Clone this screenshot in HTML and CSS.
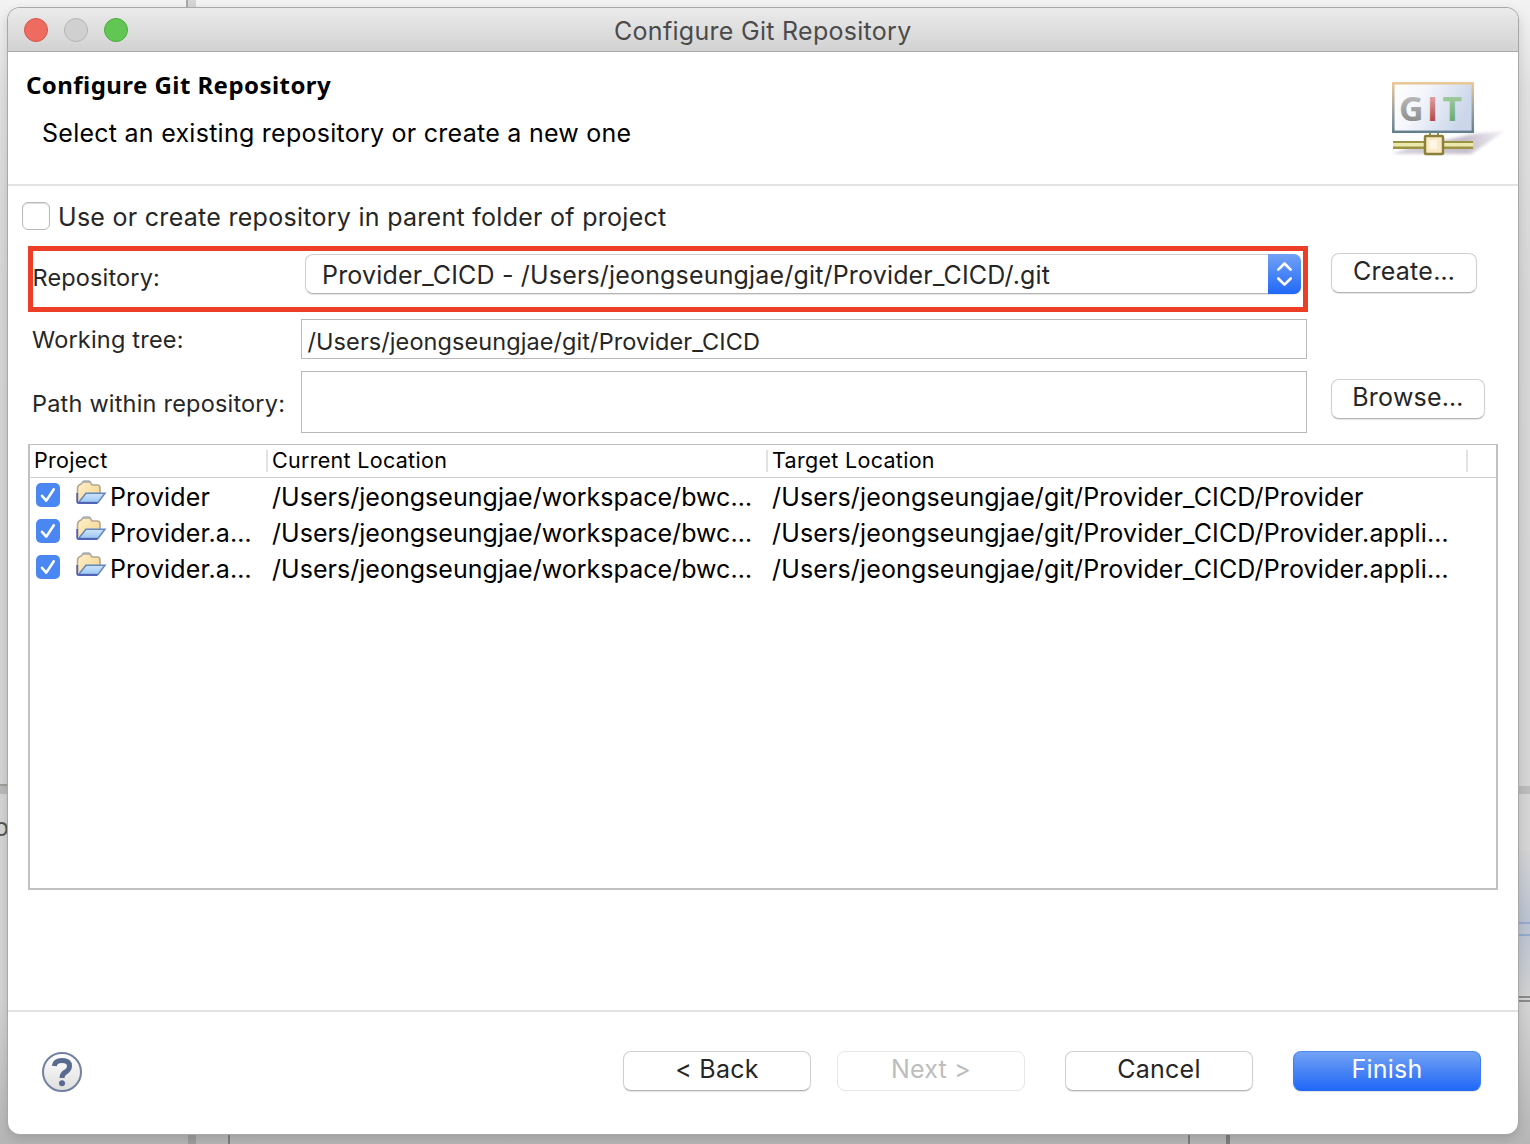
FILE: index.html
```html
<!DOCTYPE html>
<html lang="en">
<head>
<meta charset="utf-8">
<title>Configure Git Repository</title>
<link rel="stylesheet" href="styles.css">
</head>
<body>
<svg width="0" height="0" class="defs" aria-hidden="true">
  <defs>
    <linearGradient id="folder-back" x1="0" y1="0" x2="1" y2="1"><stop offset="0" stop-color="#fff1cc"/><stop offset="1" stop-color="#f3d28c"/></linearGradient>
    <linearGradient id="folder-front" x1="0" y1="0" x2="0" y2="1"><stop offset="0" stop-color="#cfe4fa"/><stop offset="1" stop-color="#9ac6f5"/></linearGradient>
    <symbol id="folder" viewBox="0 0 32 26">
      <path d="M1.500 21V8Q2 5 5 4L7 2H14L16 5H21Q24 5 24 8V14" fill="url(#folder-back)" stroke="#b5a68c" stroke-width="1.600"/>
      <path d="M6 2.500L8 1.200H13L15 2.700" fill="none" stroke="#aab0ba" stroke-width="1.800"/>
      <path d="M2.500 22.500L10 13.300H29L22 22.500Z" fill="url(#folder-front)" stroke="#6286bf" stroke-width="1.500"/>
      <path d="M1.200 13V22Q1.200 23 3 23H21.500" fill="none" stroke="#5262b4" stroke-width="1.800"/>
    </symbol>
    <symbol id="tick" viewBox="0 0 24 24"><path d="M6 12.800L10.300 17.600L17.800 6.300" fill="none" stroke="#fff" stroke-width="2.600" stroke-linecap="round" stroke-linejoin="round"/></symbol>
  </defs>
</svg>
<div class="desktop">
  <div class="backdrop" aria-hidden="true">
    <i class="edge top-divider"></i><i class="edge left-sash"></i><i class="edge right-sash"></i>
    <i class="edge glow"></i><i class="edge blue-a"></i><i class="edge blue-b"></i><i class="edge dark-a"></i><i class="edge dark-b"></i>
    <i class="edge foot foot-a"></i><i class="edge foot foot-b"></i><i class="edge foot foot-c"></i><i class="edge foot foot-d"></i>
    <span class="edge stray">o</span>
  </div>
  <main class="window">
    <header class="titlebar">
      <div class="lights"><i class="light red"></i><i class="light gray"></i><i class="light green"></i></div>
      <span class="t title">Configure Git Repository</span>
    </header>
    <section class="banner">
      <div class="banner-text">
        <h1 class="t heading">Configure Git Repository</h1>
        <p class="sub">Select an existing repository or create a new one</p>
      </div>
      <svg class="git-logo" width="120" height="84" viewBox="0 0 120 84">
        <defs>
          <linearGradient id="screen" x1="0" y1="0" x2="1" y2=".3"><stop offset="0" stop-color="#fff"/><stop offset=".4" stop-color="#f4f6fb"/><stop offset="1" stop-color="#cbd6ea"/></linearGradient>
          <linearGradient id="frame" x1="0" y1="0" x2="0" y2="1"><stop offset="0" stop-color="#eac795"/><stop offset=".5" stop-color="#a0a59c"/><stop offset="1" stop-color="#637f8c"/></linearGradient>
          <linearGradient id="letter-g" x1="0" y1="0" x2="0" y2="1"><stop offset=".2" stop-color="#bcbcbc"/><stop offset=".9" stop-color="#858585"/></linearGradient>
          <linearGradient id="letter-i" x1="0" y1="0" x2="0" y2="1"><stop offset=".3" stop-color="#dc9a99"/><stop offset=".8" stop-color="#b04446"/></linearGradient>
          <linearGradient id="letter-t" x1="0" y1="0" x2="0" y2="1"><stop offset=".3" stop-color="#9cc89a"/><stop offset=".8" stop-color="#66aa69"/></linearGradient>
          <linearGradient id="shade" x1="0" y1="0" x2="1" y2="0"><stop offset="0" stop-color="#d8d3dc"/><stop offset=".65" stop-color="#c6bfcc"/><stop offset="1" stop-color="#f4f2f6"/></linearGradient>
          <filter id="soft" x="-10%" y="-20%" width="120%" height="140%"><feGaussianBlur stdDeviation="1.500"/></filter>
        </defs>
        <path d="M5 78L24 71L87 58L118 55L84 78Z" fill="url(#shade)" filter="url(#soft)"/>
        <rect x="6.300" y="7.300" width="79.500" height="48.500" fill="url(#screen)" stroke="url(#frame)" stroke-width="2.500"/>
        <g class="logo-letters"><text x="12" y="45" fill="url(#letter-g)">G</text><text x="40" y="45" fill="url(#letter-i)">I</text><text x="55.500" y="45" fill="url(#letter-t)">T</text></g>
        <path d="M43 57V61H51V57" fill="none" stroke="#99904e" stroke-width="2"/>
        <rect x="6" y="65" width="80" height="8" fill="#9c9244"/><rect x="6" y="67" width="80" height="3.500" fill="#ece9ae"/>
        <rect x="38" y="60" width="18" height="18" rx="1" fill="#fbe9c5" stroke="#8a8037" stroke-width="2.500"/><rect x="42" y="64" width="8" height="9" fill="#fff5e4"/>
      </svg>
    </section>
    <section class="body">
      <label class="parent-option"><i class="box"></i><span class="t ui parent">Use or create repository in parent folder of project</span></label>
      <div class="form">
        <div class="highlight">
          <span class="t label repo">Repository:</span>
          <div class="combo"><span class="t ui combo-text">Provider_CICD - /Users/jeongseungjae/git/Provider_CICD/.git</span>
            <span class="stepper"><svg width="33" height="40" viewBox="0 0 33 40"><path d="M10.300 15.700L16.500 9.500L22.700 15.700M10.300 24.500L16.500 30.700L22.700 24.500" fill="none" stroke="#fff" stroke-width="2.600" stroke-linecap="round" stroke-linejoin="round"/></svg></span>
          </div>
        </div>
        <button class="button create"><span class="t ui">Create…</span></button>
        <span class="t label tree">Working tree:</span>
        <div class="field"><span class="t field-text">/Users/jeongseungjae/git/Provider_CICD</span></div>
        <span class="t label path">Path within repository:</span>
        <div class="field tall"></div>
        <button class="button browse"><span class="t ui">Browse…</span></button>
      </div>
      <div class="table">
        <div class="row head"><span>Project</span><span>Current Location</span><span>Target Location</span></div>
        <div class="row"><div class="project"><i class="check"><svg><use href="#tick"/></svg></i><svg class="folder"><use href="#folder"/></svg><span class="t cell">Provider</span></div><span class="t cell">/Users/jeongseungjae/workspace/bwc…</span><span class="t cell target">/Users/jeongseungjae/git/Provider_CICD/Provider</span></div>
        <div class="row"><div class="project"><i class="check"><svg><use href="#tick"/></svg></i><svg class="folder"><use href="#folder"/></svg><span class="t cell">Provider.a…</span></div><span class="t cell">/Users/jeongseungjae/workspace/bwc…</span><span class="t cell target">/Users/jeongseungjae/git/Provider_CICD/Provider.appli…</span></div>
        <div class="row"><div class="project"><i class="check"><svg><use href="#tick"/></svg></i><svg class="folder"><use href="#folder"/></svg><span class="t cell">Provider.a…</span></div><span class="t cell">/Users/jeongseungjae/workspace/bwc…</span><span class="t cell target">/Users/jeongseungjae/git/Provider_CICD/Provider.appli…</span></div>
      </div>
    </section>
    <footer class="footer">
      <svg class="help" width="40" height="40" viewBox="0 0 40 40"><defs><linearGradient id="help-fill" x1="0" y1="0" x2="0" y2="1"><stop offset="0" stop-color="#fff"/><stop offset="1" stop-color="#dedede"/></linearGradient></defs><circle cx="20" cy="20" r="19" fill="url(#help-fill)" stroke="#72819f" stroke-width="2"/><path d="M12.300 14Q13 8.500 20 8.500Q27.500 8.500 27.500 14Q27.500 17.500 24 19.800Q20 22 20 26" fill="none" stroke="#596a91" stroke-width="5"/><circle cx="20" cy="31.300" r="3" fill="#596a91"/></svg>
      <button class="button wide"><span class="t ui">&lt; Back</span></button>
      <button class="button wide disabled"><span class="t ui">Next &gt;</span></button>
      <button class="button wide cancel"><span class="t ui">Cancel</span></button>
      <button class="button wide primary"><span class="t ui">Finish</span></button>
    </footer>
  </main>
</div>
</body>
</html>
```
FILE: styles.css
```css
* { box-sizing: border-box; }
body { margin: 0; font-family: Inter, "Liberation Sans", sans-serif; color: #262626; }
h1, p { margin: 0; font-weight: 400; }
.defs { position: absolute; }
.t { display: block; white-space: nowrap; }
.desktop { position: relative; width: 1530px; height: 1144px; padding: 8px 12px 10px 8px; overflow: hidden; background: linear-gradient(#f3f3f3, #e0e0e0 90px, #d6d6d6 300px, #d4d4d4 1000px, #b6b6b6 1144px); }

/* Slivers of the application behind the dialog */
.backdrop { position: absolute; inset: 0; }
.edge { position: absolute; }
.top-divider { left: 186px; top: 0; width: 10px; height: 8px; background: #d5d5d5; border-left: 2px solid #aaa; }
.left-sash { left: 0; top: 784px; width: 8px; height: 10px; background: #bababa; border-top: 2px solid #a0a09a; }
.right-sash { right: 0; top: 786px; width: 12px; height: 8px; background: #bbb; }
.glow { right: 0; top: 850px; width: 12px; height: 145px; background: linear-gradient(#d2d2d2, #b9c2d2 50%, #d0d0d0); }
.blue-a, .blue-b { right: 0; width: 12px; height: 2px; background: #94a9ce; }
.blue-a { top: 922px; }
.blue-b { top: 934px; }
.dark-a, .dark-b { right: 0; width: 12px; height: 2px; background: #8a8a8a; }
.dark-a { top: 996px; }
.dark-b { top: 1000px; }
.foot { bottom: 0; width: 2px; height: 10px; background: #7e7e7e; }
.foot-a { left: 188px; width: 8px; background: #9d9d9d; }
.foot-b { left: 228px; }
.foot-c { left: 1188px; }
.foot-d { left: 1226px; width: 4px; }
.stray { left: -6px; top: 812px; font-size: 25px; line-height: 30px; color: #555; }

.window { position: relative; display: flex; flex-direction: column; height: 1126px; background: #fff; border-radius: 12px; overflow: hidden; box-shadow: 0 0 0 1px #a8a8a8, 0 4px 12px rgba(0, 0, 0, .16); }
.titlebar { display: grid; grid-template-columns: 600px 1fr; height: 44px; align-items: center; padding-left: 6px; background: linear-gradient(#ebebeb, #d2d2d2); border-bottom: 1px solid #a9a9a9; color: #4b4b4b; }
.lights { display: flex; gap: 16px; padding-left: 10px; }
.light { width: 24px; height: 24px; border-radius: 50%; border: 1px solid; }
.red { background: #ed6b5f; border-color: #d8574c; }
.gray { background: #d0d0d0; border-color: #b4b4b4; }
.green { background: #61c654; border-color: #4cab3e; }
.title, .sub, .ui, .cell { font-size: 25px; line-height: 32px; }
.title { letter-spacing: .29px; padding-top: 2px; }

.banner { display: flex; justify-content: space-between; height: 134px; padding: 17px 11px 0 18px; border-bottom: 2px solid #e3e3e3; color: #000; }
.heading { font: 700 24px/32px "Noto Sans", sans-serif; letter-spacing: .44px; }
.sub { padding: 16px 0 0 16px; letter-spacing: .26px; }
.git-logo { margin-top: 7px; }
.logo-letters { font: 700 34px "Open Sans", sans-serif; }

.body { height: 824px; padding: 16px 20px 0; }
.parent-option { display: flex; gap: 8px; height: 44px; margin-left: -6px; }
.parent { margin-top: -1px; letter-spacing: .28px; }
.box { width: 28px; height: 28px; border: 1px solid #b9b9b9; border-radius: 6px; box-shadow: inset 0 1px 1px #ddd; }
.form { display: grid; grid-template-columns: 273px 1007px 1fr; grid-template-rows: 66px 54px 78px; }
.highlight { grid-column: 1 / 3; display: grid; grid-template-columns: 272px 996px; border: 5px solid #ed3f27; height: 66px; }
.label, .field-text { font-size: 23.5px; line-height: 30px; }
.repo { padding-top: 12px; letter-spacing: .15px; margin-left: -.5px; }
.tree { grid-column: 1; padding: 13px 0 0 4px; letter-spacing: .2px; }
.path { grid-column: 1; padding: 23px 0 0 4px; letter-spacing: .2px; }
.combo { display: flex; justify-content: space-between; width: 996px; height: 40px; margin-top: 3px; padding-left: 16px; border: 1px solid #cfcfcf; border-bottom-color: #b5b5b5; border-radius: 8px; box-shadow: 0 1px 1px #e4e4e4; }
.combo-text { padding-top: 4px; letter-spacing: .17px; }
.stepper { width: 33px; height: 40px; margin: -1px; border-radius: 0 7px 7px 0; background: linear-gradient(#72a2f4, #2068f8); }
.field { width: 1006px; height: 40px; margin-top: 7px; padding: 7px 5.5px; border: 1px solid #b9b9b9; }
.field-text { letter-spacing: .08px; }
.field.tall { height: 62px; margin-top: 5px; }

.button { height: 40px; padding: 0 0 4px; border: 1px solid #d0d0d0; border-bottom-color: #b5b5b5; border-radius: 8px; background: #fff; box-shadow: 0 1px 1px #e4e4e4; color: #262626; font-family: inherit; text-align: center; letter-spacing: .25px; }
.create { width: 146px; margin: 7px 0 0 23px; }
.browse { width: 154px; margin: 13px 0 0 23px; }

.table { height: 446px; border: 2px solid #c1c1c1; border-top-width: 1px; color: #000; }
.row { display: grid; grid-template-columns: 242px 500px 700px; height: 36px; }
.head { grid-template-columns: 238px 500px 700px; height: 33px; padding-top: 5px; border-bottom: 1px solid #d0d0d0; font-size: 21.5px; line-height: 21px; letter-spacing: .3px; }
.head > span { height: 22px; padding-left: 4px; border-right: 2px solid #e2e2e2; }
.project { display: flex; padding-left: 6px; }
.check { width: 24px; height: 24px; margin-top: 5px; border-radius: 5px; background: #4b87f3; }
.check svg { display: block; width: 24px; height: 24px; }
.folder { width: 32px; height: 26px; margin: 2px 2px 0 16px; }
.cell { padding-top: 3px; letter-spacing: .03px; }
.project .cell { letter-spacing: .15px; }
.target { letter-spacing: .14px; }

.footer { display: flex; height: 124px; padding: 39px 37px 0 34px; border-top: 2px solid #e3e3e3; }
.help { margin: 1px auto 0 0; }
.wide { width: 188px; margin-left: 26px; }
.cancel, .primary { margin-left: 40px; }
.disabled { color: #bdbdbd; border-color: #e6e6e6; box-shadow: none; }
.primary { color: #fff; border-color: #4c88f0 #3d7cf3 #2368ee; background: linear-gradient(#72a2f4, #2068f8); }
```
